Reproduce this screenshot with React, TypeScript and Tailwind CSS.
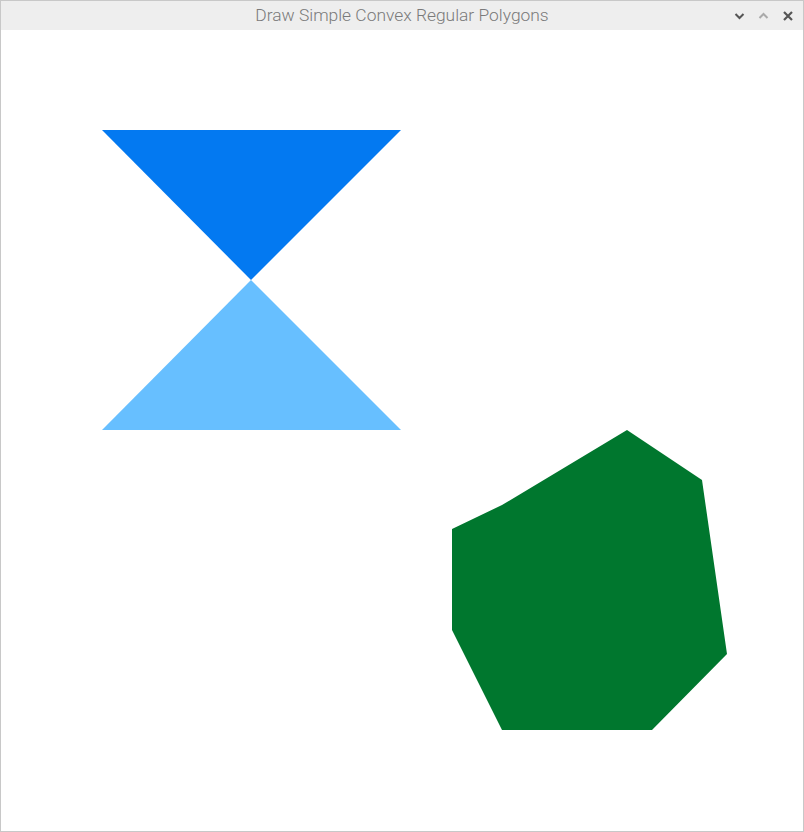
import React from "react";

export default function App() {
  return (
    <div className="w-[804px] h-[832px] flex flex-col bg-white border border-[#c8c8c8] box-border overflow-hidden">
      <div className="h-[29px] shrink-0 bg-[#eeeeee] flex items-center relative">
        <div className="flex-1 text-center text-[17.4px] text-[#7a7a7a] font-light leading-none pt-[1px]" style={{ fontFamily: "Roboto, 'Liberation Sans', sans-serif" }}>
          Draw Simple Convex Regular Polygons
        </div>
        <div className="absolute right-[9px] top-0 h-full flex items-center gap-[13px]">
          <svg width="11" height="8" viewBox="0 0 11 8">
            <path d="M1.5 2 L5.5 6 L9.5 2" stroke="#555" strokeWidth="2" fill="none" />
          </svg>
          <svg width="11" height="8" viewBox="0 0 11 8">
            <path d="M1.5 6 L5.5 2 L9.5 6" stroke="#aaa" strokeWidth="2" fill="none" />
          </svg>
          <svg width="12" height="12" viewBox="0 0 12 12">
            <path d="M2 2 L10 10 M10 2 L2 10" stroke="#555" strokeWidth="2.2" fill="none" />
          </svg>
        </div>
      </div>
      <div className="flex-1 relative">
        <svg width="802" height="801" viewBox="1 30 802 801" className="block">
          <polygon points="102,130 401,130 251,280" fill="#0379f1" />
          <polygon points="251,280 401,430 102,430" fill="#67bfff" />
          <polygon points="627,430 702,480 727,654 652,730 502,730 452,630 452,529 502,505" fill="#00772e" />
        </svg>
      </div>
    </div>
  );
}
